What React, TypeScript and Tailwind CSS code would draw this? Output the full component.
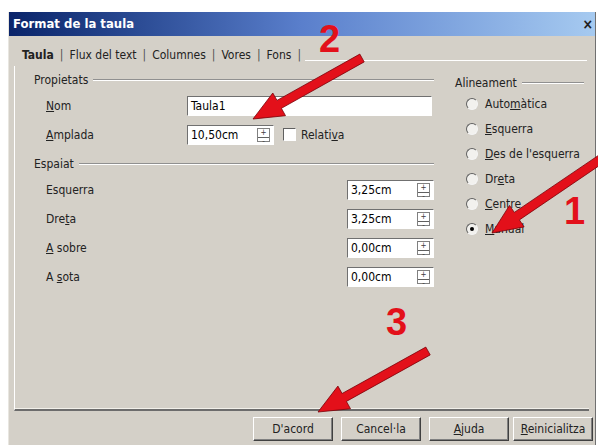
import React from "react"

const font = { fontFamily: '"DejaVu Sans Condensed", "Liberation Sans", sans-serif' }
const digitFont = { fontFamily: '"Liberation Sans", Arial, sans-serif' }

function Field({ value, className = "" }: { value: string; className?: string }) {
  return (
    <div className={`flex h-[20px] items-center border border-t-[#707070] border-l-[#707070] border-r-white border-b-white bg-white pl-[3px] text-[12px] text-black ${className}`}>
      {value}
    </div>
  )
}

function Spin({ value, className = "" }: { value: string; className?: string }) {
  return (
    <div className={`flex h-[20px] items-stretch border border-t-[#707070] border-l-[#707070] border-r-white border-b-white bg-white text-[12px] ${className}`}>
      <div className="flex flex-1 items-center pl-[3px] text-black">{value}</div>
      <div className="my-[2px] mr-[3px] flex w-[13px] flex-col border border-[#808080]">
        <div className="flex flex-1 items-center justify-center border-b border-[#606060] text-[8px] leading-none text-[#404040]">+</div>
        <div className="flex flex-1 items-center justify-center text-[8px] leading-none text-[#404040]">-</div>
      </div>
    </div>
  )
}

function Radio({ label, checked = false }: { label: React.ReactNode; checked?: boolean }) {
  return (
    <div className="flex h-[25px] items-center gap-[7px] pl-[11px]">
      <div className="relative h-[12px] w-[12px] rounded-full border border-t-[#606060] border-l-[#606060] border-r-[#f4f4f4] border-b-[#f4f4f4] bg-[#f2f1ee]">
        {checked && <div className="absolute left-[3px] top-[3px] h-[4px] w-[4px] rounded-full bg-black" />}
      </div>
      <span className="whitespace-nowrap text-[12px] text-[#222]">{label}</span>
    </div>
  )
}

function GroupTitle({ title, className = "" }: { title: string; className?: string }) {
  return (
    <div className={`flex h-[16px] items-center gap-[5px] text-[12px] text-[#222] ${className}`}>
      <span>{title}</span>
      <div className="flex-1 border-t border-b border-t-[#909090] border-b-white" />
    </div>
  )
}

function Button({ children, className = "" }: { children: React.ReactNode; className?: string }) {
  return (
    <div className={`flex h-[24px] items-center justify-center border border-t-white border-l-white border-r-[#404040] border-b-[#404040] bg-[#d4d0c8] text-[12px] text-[#222] shadow-[inset_-1px_-1px_0_#808080] ${className}`}>
      {children}
    </div>
  )
}

// thick annotation arrow from (sx, sy) to the tip (tx, ty)
function arrow(sx: number, sy: number, tx: number, ty: number, w = 9, len = 30, head = 26) {
  const dx = tx - sx
  const dy = ty - sy
  const d = Math.hypot(dx, dy)
  const ux = dx / d
  const uy = dy / d
  const px = -uy
  const py = ux
  const bx = tx - ux * len
  const by = ty - uy * len
  const pts = [
    [sx + px * w / 2, sy + py * w / 2],
    [bx + px * w / 2, by + py * w / 2],
    [bx + px * head / 2, by + py * head / 2],
    [tx, ty],
    [bx - px * head / 2, by - py * head / 2],
    [bx - px * w / 2, by - py * w / 2],
    [sx - px * w / 2, sy - py * w / 2],
  ]
  return pts.map(([x, y]) => `${x.toFixed(1)},${y.toFixed(1)}`).join(" ")
}

const spacing = [
  { label: <>Esquerra</>, value: "3,25cm" },
  { label: <>Dre<u>t</u>a</>, value: "3,25cm" },
  { label: <><u>A</u> sobre</>, value: "0,00cm" },
  { label: <>A <u>s</u>ota</>, value: "0,00cm" },
]

export default function App() {
  return (
    <div className="relative h-[445px] w-[598px] overflow-hidden bg-white pl-[8px] pt-[12px]" style={font}>
      <div className="flex h-[433px] w-[588px] flex-col border-l border-r border-l-[#e8e6e0] border-r-[#707070] bg-[#d4d0c8]">
        {/* title bar */}
        <div className="flex h-[24px] items-center justify-between bg-gradient-to-r from-[#0a246a] via-[#5a7fcc] to-[#a6caf0] pl-[4px] pr-[2px]">
          <span className="text-[13px] font-bold text-white">Format de la taula</span>
          <span className="text-[14px] font-bold leading-none text-[#202020]">×</span>
        </div>

        {/* tabs */}
        <div className="flex h-[30px] items-end">
          <div className="flex h-[22px] items-center gap-[6px] pl-[13px] pr-[4px] text-[12px] text-[#222]">
            <span className="font-bold">Taula</span>
            <span className="text-[#505050]">|</span>
            <span>Flux del text</span>
            <span className="text-[#505050]">|</span>
            <span>Columnes</span>
            <span className="text-[#505050]">|</span>
            <span>Vores</span>
            <span className="text-[#505050]">|</span>
            <span>Fons</span>
            <span className="text-[#505050]">|</span>
          </div>
          <div className="mb-[4px] mr-[8px] h-[2px] flex-1 border-t border-t-white" />
        </div>

        {/* tab page */}
        <div className="ml-[5px] mr-[6px] flex h-[345px] border-l border-l-white border-b-2 border-b-[#6c6c6c] shadow-[inset_0_-8px_0_-7px_#f2f0ea]">
          <div className="w-[427px] pl-[19px] pr-[8px] pt-[6px]">
            <GroupTitle title="Propietats" />
            <div className="mt-[3px] flex h-[29px] items-center pl-[12px]">
              <span className="w-[141px] text-[12px] text-[#222]"><u>N</u>om</span>
              <Field value="Taula1" className="w-[245px]" />
            </div>
            <div className="flex h-[29px] items-center pl-[12px]">
              <span className="w-[141px] text-[12px] text-[#222]"><u>A</u>mplada</span>
              <Spin value="10,50cm" className="w-[87px]" />
              <div className="ml-[9px] h-[13px] w-[13px] border border-t-[#606060] border-l-[#606060] border-r-white border-b-white bg-white" />
              <span className="ml-[5px] text-[12px] text-[#222]">Relati<u>v</u>a</span>
            </div>
            <GroupTitle title="Espaiat" className="mt-[7px]" />
            <div className="mt-[3px] flex flex-col">
              {spacing.map((row, i) => (
                <div key={i} className="flex h-[29px] items-center pl-[12px]">
                  <span className="flex-1 text-[12px] text-[#222]">{row.label}</span>
                  <Spin value={row.value} className="w-[87px]" />
                </div>
              ))}
            </div>
          </div>

          <div className="flex-1 overflow-hidden pl-[13px] pr-[5px] pt-[9px]">
            <GroupTitle title="Alineament" />
            <div className="flex flex-col">
              <Radio label={<>Auto<u>m</u>àtica</>} />
              <Radio label={<><u>E</u>squerra</>} />
              <Radio label={<><u>D</u>es de l'esquerra</>} />
              <Radio label={<>Dr<u>e</u>ta</>} />
              <Radio label={<><u>C</u>entre</>} />
              <Radio label={<><u>M</u>anual</>} checked />
            </div>
          </div>
        </div>

        {/* buttons */}
        <div className="flex flex-1 items-center pl-[244px] pt-[1px]">
          <Button className="w-[80px]">D'acord</Button>
          <Button className="ml-[8px] w-[80px]">Cancel·la</Button>
          <Button className="ml-[8px] w-[80px]"><span><u>A</u>juda</span></Button>
          <Button className="ml-[4px] w-[80px]"><span><u>R</u>einicialitza</span></Button>
        </div>
      </div>

      {/* annotation arrows */}
      <svg className="pointer-events-none absolute left-0 top-0" width="598" height="445" viewBox="0 0 598 445">
        <g fill="#e3101a" stroke="#7a0008" strokeWidth="0.8" strokeLinejoin="round">
          <polygon points={arrow(362, 58, 253, 119)} />
          <polygon points={arrow(604, 157, 492, 233)} />
          <polygon points={arrow(428, 351, 318, 412)} />
        </g>
      </svg>
      <span className="absolute left-[319px] top-[20px] text-[38px] font-bold leading-none text-[#e3101a]" style={digitFont}>2</span>
      <span className="absolute left-[564px] top-[192px] text-[38px] font-bold leading-none text-[#e3101a]" style={digitFont}>1</span>
      <span className="absolute left-[386px] top-[303px] text-[38px] font-bold leading-none text-[#e3101a]" style={digitFont}>3</span>
    </div>
  )
}
